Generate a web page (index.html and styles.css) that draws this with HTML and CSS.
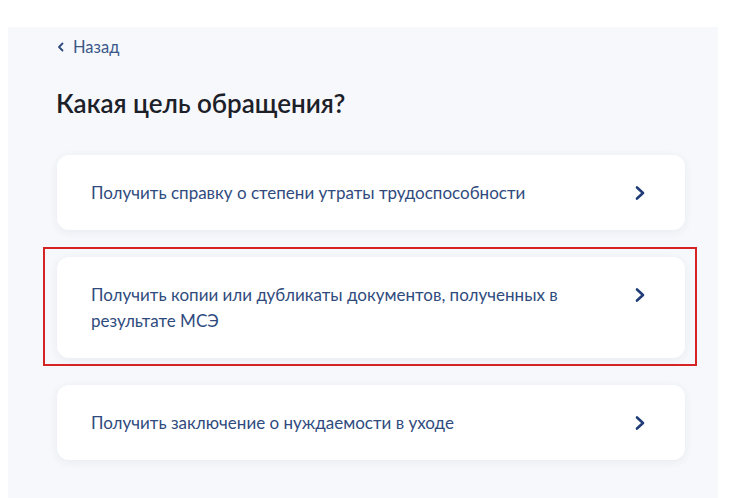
FILE: index.html
```html
<!DOCTYPE html>
<html lang="ru">
<head>
<meta charset="utf-8">
<link rel="stylesheet" href="styles.css">
</head>
<body>
<main class="panel">
  <a class="back" href="#">
    <svg class="back-icon" width="8" height="10" viewBox="0 0 8 10"><path d="M5.5 1.5 L2 5 L5.5 8.5" fill="none" stroke="#2e4a7d" stroke-width="1.8" stroke-linecap="round" stroke-linejoin="round"/></svg>
    <span>Назад</span>
  </a>
  <h1 class="title">Какая цель обращения?</h1>
  <div class="list">
    <a class="card" href="#">
      <span class="card-text">Получить справку о степени утраты трудоспособности</span>
      <svg class="chev" width="12" height="16" viewBox="0 0 12 16"><path d="M3 2.5 L9 8 L3 13.5" fill="none" stroke="#1f3c78" stroke-width="2.6" stroke-linecap="round" stroke-linejoin="round"/></svg>
    </a>
    <a class="card card-marked" href="#">
      <span class="card-text">Получить копии или дубликаты документов, полученных в результате МСЭ</span>
      <svg class="chev" width="12" height="16" viewBox="0 0 12 16"><path d="M3 2.5 L9 8 L3 13.5" fill="none" stroke="#1f3c78" stroke-width="2.6" stroke-linecap="round" stroke-linejoin="round"/></svg>
    </a>
    <a class="card" href="#">
      <span class="card-text">Получить заключение о нуждаемости в уходе</span>
      <svg class="chev" width="12" height="16" viewBox="0 0 12 16"><path d="M3 2.5 L9 8 L3 13.5" fill="none" stroke="#1f3c78" stroke-width="2.6" stroke-linecap="round" stroke-linejoin="round"/></svg>
    </a>
  </div>
</main>
</body>
</html>
```
FILE: styles.css
```css
html, body {
  margin: 0;
  padding: 0;
  background: #ffffff;
  font-family: Lato, "Noto Sans", "Liberation Sans", sans-serif;
}
.panel {
  margin: 27px 0 0 8px;
  width: 710px;
  height: 471px;
  box-sizing: border-box;
  background: #f6f8fb;
  padding: 10px 33px 0 49px;
}
.back {
  display: flex;
  align-items: center;
  gap: 8px;
  height: 20px;
  text-decoration: none;
  color: #3a5788;
  font-size: 16.5px;
  padding-left: 0;
}
.back-icon { display: block; }
.title {
  margin: 31px 0 0 -1px;
  font-size: 26px;
  line-height: 30px;
  font-weight: 600;
  color: #1c2029;
}
.list {
  margin-top: 37px;
  display: flex;
  flex-direction: column;
  gap: 27px;
}
.card {
  position: relative;
  display: flex;
  align-items: flex-start;
  justify-content: space-between;
  background: #ffffff;
  border-radius: 12px;
  box-shadow: 0 2px 10px rgba(40, 60, 100, 0.07);
  padding: 24.5px 39px 24.5px 34px;
  text-decoration: none;
}
.card-text {
  font-size: 17px;
  line-height: 26px;
  color: #2f4b7e;
  max-width: 500px;
}
.chev { display: block; flex: none; margin-top: 5px; }
.card-marked::after {
  content: "";
  position: absolute;
  top: -10px;
  left: -14px;
  right: -12px;
  bottom: -8px;
  border: 2px solid #d42424;
  pointer-events: none;
}
```
